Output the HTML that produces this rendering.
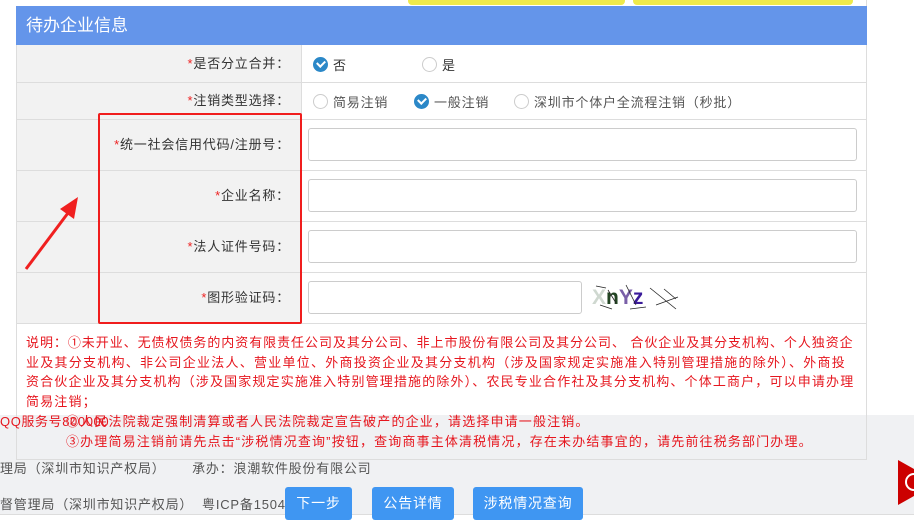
<!DOCTYPE html>
<html><head><meta charset="utf-8"><style>
*{margin:0;padding:0;box-sizing:border-box}
body{width:914px;height:523px;overflow:hidden;background:#fff;font-family:"Liberation Sans","Noto Sans CJK SC",sans-serif;font-size:13px;color:#333;position:relative;letter-spacing:0.8px}
.a{position:absolute;white-space:nowrap}
.lab{position:absolute;left:17px;width:284px;background:#f2f2f2;text-align:right;padding-right:11px;border-bottom:1px solid #ddd}
.star{color:#e22}
.row{position:absolute;left:301px;width:565px;border-bottom:1px solid #ddd;border-left:1px solid #ddd}
.inp{position:absolute;left:308px;width:549px;height:33px;border:1px solid #ccc;border-radius:3px;background:#fff}
.rc{position:absolute;width:15px;height:15px;border-radius:50%;border:1px solid #ccc;background:#fff}
.rk{position:absolute;width:15px;height:15px;border-radius:50%;background:#2b88c8}
.rk:after{content:"";position:absolute;left:4px;top:3px;width:6px;height:4px;border-left:2px solid #fff;border-bottom:2px solid #fff;transform:rotate(-45deg)}
.note{color:#e6161e;font-size:13px;line-height:19.6px;letter-spacing:1.15px}
.btn{position:absolute;top:487px;height:33px;background:#3f96f2;color:#fff;border-radius:3px;text-align:center;line-height:33px;font-size:14px}
</style></head><body>
<div class="a" style="left:408px;top:0;width:217px;height:5px;background:#efea4c;border-radius:0 0 4px 4px"></div>
<div class="a" style="left:633px;top:0;width:220px;height:5px;background:#efea4c;border-radius:0 0 4px 4px"></div>
<div class="a" style="left:866px;top:0;width:1px;height:460px;background:#ddd"></div>
<div class="a" style="left:16px;top:6px;width:1px;height:454px;background:#ddd"></div>
<div class="a" style="left:16px;top:6px;width:851px;height:39px;background:#6495ea;color:#fff;font-size:17px;line-height:39px;padding-left:10px;letter-spacing:0">待办企业信息</div>

<div class="lab" style="top:45px;height:38px;line-height:37px"><span class="star">*</span>是否分立合并：</div>
<div class="row" style="top:45px;height:38px"></div>
<div class="rk" style="left:313px;top:57px"></div><div class="a" style="left:333px;top:55px">否</div>
<div class="rc" style="left:422px;top:57px"></div><div class="a" style="left:442px;top:55px">是</div>

<div class="lab" style="top:83px;height:37px;line-height:36px"><span class="star">*</span>注销类型选择：</div>
<div class="row" style="top:83px;height:37px"></div>
<div class="rc" style="left:313px;top:94px"></div><div class="a" style="left:333px;top:92px;color:#555">简易注销</div>
<div class="rk" style="left:414px;top:94px"></div><div class="a" style="left:434px;top:92px;color:#555">一般注销</div>
<div class="rc" style="left:514px;top:94px"></div><div class="a" style="left:534px;top:92px;color:#555">深圳市个体户全流程注销（秒批）</div>

<div class="lab" style="top:120px;height:51px;line-height:50px"><span class="star">*</span>统一社会信用代码/注册号：</div>
<div class="row" style="top:120px;height:51px"></div>
<div class="inp" style="top:128px"></div>
<div class="lab" style="top:171px;height:51px;line-height:50px"><span class="star">*</span>企业名称：</div>
<div class="row" style="top:171px;height:51px"></div>
<div class="inp" style="top:179px"></div>
<div class="lab" style="top:222px;height:51px;line-height:50px"><span class="star">*</span>法人证件号码：</div>
<div class="row" style="top:222px;height:51px"></div>
<div class="inp" style="top:230px"></div>
<div class="lab" style="top:273px;height:51px;line-height:50px"><span class="star">*</span>图形验证码：</div>
<div class="row" style="top:273px;height:51px"></div>
<div class="inp" style="top:281px;width:274px"></div>
<div class="a" style="left:592px;top:286px;font-size:21px;font-weight:bold;letter-spacing:0"><span style="color:#cfd8d0">X</span><span style="color:#224422">n</span><span style="color:#7a5fa8">Y</span><span style="color:#3a1a9a">z</span></div>
<svg class="a" style="left:588px;top:283px" width="95" height="30"><g stroke="#222" stroke-width="0.8"><line x1="8" y1="3" x2="18" y2="5"/><line x1="20" y1="7" x2="28" y2="20"/><line x1="38" y1="2" x2="48" y2="22"/><line x1="62" y1="5" x2="88" y2="26"/><line x1="68" y1="22" x2="90" y2="14"/><line x1="76" y1="6" x2="88" y2="16"/><line x1="12" y1="22" x2="24" y2="26"/><line x1="42" y1="26" x2="58" y2="24"/></g></svg>

<div class="a" style="left:98px;top:113px;width:204px;height:211px;border:2.5px solid #f01d1d;border-radius:2px"></div>
<svg class="a" style="left:20px;top:195px" width="65" height="80"><line x1="6" y1="74" x2="48" y2="18" stroke="#f02020" stroke-width="3"/><polygon points="58,2 40,14 54,24" fill="#f02020"/></svg>

<div class="a" style="left:0;top:415px;width:914px;height:99px;background:#f0f1f3"></div>
<div class="a" style="left:0;top:514px;width:914px;height:1px;background:#ddd"></div>
<div class="a" style="left:16px;top:324px;width:851px;height:136px;border:1px solid #ddd;border-top:none"></div>
<div class="a" style="left:16px;top:324px;width:851px;height:91px;background:#fff;border-left:1px solid #ddd;border-right:1px solid #ddd"></div>
<div class="a note" style="left:26px;top:333px;width:842px;white-space:normal"><span style="letter-spacing:0.95px">说明：①未开业、无债权债务的内资有限责任公司及其分公司、非上市股份有限公司及其分公司、 合伙企业及其分支机构、个人独资企</span><br><span style="letter-spacing:1.25px">业及其分支机构、非公司企业法人、营业单位、外商投资企业及其分支机构（涉及国家规定实施准入特别管理措施的除外）、外商投</span><br>资合伙企业及其分支机构（涉及国家规定实施准入特别管理措施的除外）、农民专业合作社及其分支机构、个体工商户，可以申请办理<br>简易注销；</div>
<div class="a note" style="left:0;top:412px;letter-spacing:0.6px">QQ服务号800000</div>
<div class="a note" style="left:66px;top:412px;letter-spacing:1.15px">②人民法院裁定强制清算或者人民法院裁定宣告破产的企业，请选择申请一般注销。</div>
<div class="a note" style="left:66px;top:432px">③办理简易注销前请先点击“涉税情况查询”按钮，查询商事主体清税情况，存在未办结事宜的，请先前往税务部门办理。</div>
<div class="a" style="left:0;top:458px;color:#555">理局（深圳市知识产权局）&nbsp;&nbsp;&nbsp;&nbsp;&nbsp;&nbsp;承办：浪潮软件股份有限公司</div>
<div class="a" style="left:0;top:494px;color:#555">督管理局（深圳市知识产权局）&nbsp;&nbsp;粤ICP备1504</div>
<div class="btn" style="left:285px;width:67px">下一步</div>
<div class="btn" style="left:372px;width:82px">公告详情</div>
<div class="btn" style="left:473px;width:110px">涉税情况查询</div>
<div class="a" style="left:898px;top:460px;width:16px;height:45px;background:#c00;clip-path:polygon(0 0,100% 20%,100% 80%,0 100%)"></div>
<div class="a" style="left:905px;top:473px;width:18px;height:18px;border:2px solid #fff;border-radius:50%"></div>
</body></html>
